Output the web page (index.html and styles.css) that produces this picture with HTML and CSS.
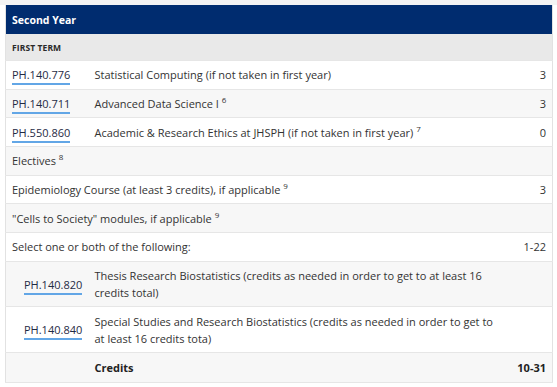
FILE: index.html
```html
<!DOCTYPE html>
<html>
<head>
<meta charset="utf-8">
<link rel="stylesheet" href="styles.css">
</head>
<body>
<div class="wrap">
<table class="plan">
  <colgroup><col class="c-code"><col class="c-title"><col class="c-hrs"></colgroup>
  <thead>
    <tr class="year"><th colspan="3">Second Year</th></tr>
  </thead>
  <tbody>
    <tr class="term"><td colspan="3">FIRST TERM</td></tr>
    <tr class="odd"><td class="code"><a href="#">PH.140.776</a></td><td class="title">Statistical Computing (if not taken in first year)</td><td class="hrs">3</td></tr>
    <tr class="even"><td class="code"><a href="#">PH.140.711</a></td><td class="title">Advanced Data Science I <sup>6</sup></td><td class="hrs">3</td></tr>
    <tr class="odd"><td class="code"><a href="#">PH.550.860</a></td><td class="title">Academic &amp; Research Ethics at JHSPH (if not taken in first year) <sup>7</sup></td><td class="hrs">0</td></tr>
    <tr class="even"><td class="span" colspan="2">Electives <sup>8</sup></td><td class="hrs"></td></tr>
    <tr class="odd"><td class="span" colspan="2">Epidemiology Course (at least 3 credits), if applicable <sup>9</sup></td><td class="hrs">3</td></tr>
    <tr class="even"><td class="span" colspan="2">"Cells to Society" modules, if applicable <sup>9</sup></td><td class="hrs"></td></tr>
    <tr class="odd"><td class="span" colspan="2">Select one or both of the following:</td><td class="hrs">1-22</td></tr>
    <tr class="even tall"><td class="code indent"><a href="#">PH.140.820</a></td><td class="title">Thesis Research Biostatistics (credits as needed in order to get to at least 16 credits total)</td><td class="hrs"></td></tr>
    <tr class="odd tall"><td class="code indent"><a href="#">PH.140.840</a></td><td class="title">Special Studies and Research Biostatistics (credits as needed in order to get to at least 16 credits tota)</td><td class="hrs"></td></tr>
    <tr class="even total"><td class="code"></td><td class="title">Credits</td><td class="hrs">10-31</td></tr>
  </tbody>
</table>
</div>
</body>
</html>
```
FILE: styles.css
```css
html, body {
  margin: 0;
  padding: 0;
  background: #ffffff;
}
.wrap {
  padding: 5px 4px 0 5px;
  background: linear-gradient(#f3f3f3 0 5px, #ffffff 5px);
}
.plan {
  width: 548px;
  table-layout: fixed;
  border-collapse: collapse;
  font-family: "Open Sans", "Noto Sans", sans-serif;
  font-size: 11px;
  color: #333333;
  border-left: 1px solid #e2e2e2;
  border-right: 1px solid #e2e2e2;
}
.c-code { width: 84px; }
.c-hrs { width: 50px; }
.plan td, .plan th {
  padding: 0 6px;
  height: 27.7px;
  vertical-align: middle;
  text-align: left;
  border-bottom: 1px solid #e6e6e6;
}
.year th {
  background: #002c6f;
  color: #ffffff;
  font-weight: 700;
  font-size: 10.5px;
  height: 29px;
  border-bottom: 0;
}
.term td {
  background: #e9e9e9;
  font-size: 8.5px;
  font-weight: 700;
  height: 26px;
  letter-spacing: 0.1px;
  color: #2a2a2a;
}
.odd td { background: #ffffff; }
.even td { background: #f7f7f7; }
.code {
  white-space: nowrap;
}
.code.indent { padding-left: 18px; }
.code a {
  color: #1f2b45;
  text-decoration: none;
  border-bottom: 2px solid #62a6e6;
  padding-bottom: 1px;
}
.title { padding-left: 5px !important; line-height: 17px; }
.tall td { height: 44.5px; }
.hrs {
  text-align: right !important;
  padding-right: 6px !important;
}
sup {
  font-size: 8px;
  vertical-align: 5px;
  line-height: 0;
}
.total td {
  font-weight: 700;
  color: #222222;
  height: 29px;
}
```
